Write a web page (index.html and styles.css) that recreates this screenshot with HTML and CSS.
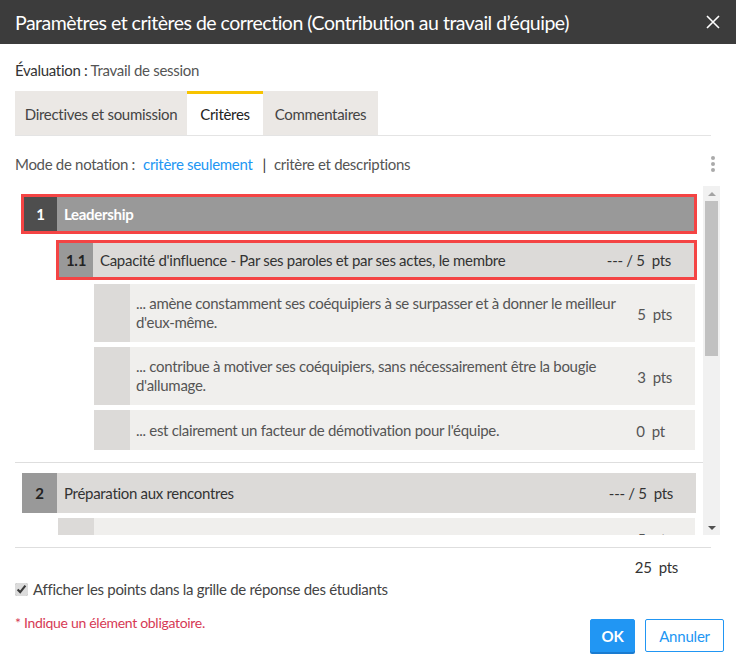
FILE: index.html
```html
<!DOCTYPE html>
<html lang="fr">
<head>
    <meta charset="UTF-8">
    <title>Paramètres et critères de correction</title>
    <link rel="stylesheet" href="styles.css">
</head>
<body>
    <div class="modal">
        <div class="modal-head">
            <h1>Paramètres et critères de correction (Contribution au travail d’équipe)</h1>
            <svg class="close" width="14" height="14" viewBox="0 0 14 14"><path d="M1 1 L13 13 M13 1 L1 13" stroke="#fff" stroke-width="1.6"/></svg>
        </div>
        <div class="modal-body">
            <p class="eval"><span class="eval-label">Évaluation :</span> Travail de session</p>
            <div class="tabs">
                <div class="tab t1">Directives et soumission</div>
                <div class="tab t2 active">Critères</div>
                <div class="tab t3">Commentaires</div>
            </div>
            <div class="mode">
                <span>Mode de notation :</span>
                <a href="#" class="mode-link">critère seulement</a>
                <span class="sep">|</span>
                <span>critère et descriptions</span>
                <span class="kebab"><i></i><i></i><i></i></span>
            </div>

            <div class="grid-wrap">
                <div class="grid">
                    <div class="crit main hl">
                        <div class="num">1</div>
                        <div class="label">Leadership</div>
                    </div>
                    <div class="crit sub hl">
                        <div class="num">1.1</div>
                        <div class="label">Capacité d'influence - Par ses paroles et par ses actes, le membre</div>
                        <div class="score">--- / 5&nbsp; pts</div>
                    </div>
                    <div class="level l2">
                        <div class="num"></div>
                        <div class="label">... amène constamment ses coéquipiers à se surpasser et à donner le meilleur d'eux-même.</div>
                        <div class="score">5&nbsp; pts</div>
                    </div>
                    <div class="level l2">
                        <div class="num"></div>
                        <div class="label">... contribue à motiver ses coéquipiers, sans nécessairement être la bougie d'allumage.</div>
                        <div class="score">3&nbsp; pts</div>
                    </div>
                    <div class="level l2">
                        <div class="num"></div>
                        <div class="label">... est clairement un facteur de démotivation pour l'équipe.</div>
                        <div class="score">0&nbsp; pt&nbsp;&nbsp;</div>
                    </div>
                    <div class="divider"></div>
                    <div class="crit main plain">
                        <div class="num">2</div>
                        <div class="label">Préparation aux rencontres</div>
                        <div class="score">--- / 5&nbsp; pts</div>
                    </div>
                    <div class="level l1">
                        <div class="num"></div>
                        <div class="label"></div>
                        <div class="score">5&nbsp; pts</div>
                    </div>
                </div>
                <div class="scrollbar">
                    <span class="arrow up"></span>
                    <span class="thumb"></span>
                    <span class="track"></span>
                    <span class="arrow down"></span>
                </div>
            </div>

            <div class="total">25&nbsp; pts</div>
            <label class="check"><input type="checkbox" checked> Afficher les points dans la grille de réponse des étudiants</label>
            <div class="foot">
                <span class="required">* Indique un élément obligatoire.</span>
                <div class="buttons">
                    <button class="btn btn-ok">OK</button>
                    <button class="btn btn-cancel">Annuler</button>
                </div>
            </div>
        </div>
    </div>
</body>
</html>
```

FILE: styles.css
```css
html, body { margin: 0; padding: 0; background: #fff; }
body { font-family: "Lato", "Liberation Sans", sans-serif; color: #333; font-size: 15px; letter-spacing: -0.3px; }
* { box-sizing: border-box; }

.modal { width: 736px; height: 669px; background: #fff; }
.modal-head { height: 44px; background: #3c3c3c; display: flex; align-items: center; justify-content: space-between; padding: 0 16px 0 15px; }
.modal-head h1 { margin: 0; font-size: 19.5px; font-weight: normal; color: #fff; letter-spacing: -0.5px; }

.modal-body { padding: 0 15px; }
.eval { margin: 0; padding-top: 17px; height: 47px; color: #555; }
.eval-label { color: #333; }

.tabs { display: flex; height: 45px; border-bottom: 1px solid #e4e4e4; width: 696px; }
.tab { background: #ebe8e5; color: #444; display: flex; align-items: center; justify-content: center; height: 44px; border-top: 3px solid transparent; padding-bottom: 2px; }
.tab.t1 { width: 172px; }
.tab.t2 { width: 76px; }
.tab.t3 { width: 115px; }
.tab.active { background: #fff; border-top-color: #f7c300; color: #222; }

.mode { display: flex; align-items: center; height: 50px; padding-top: 6px; color: #555; }
.mode-link { color: #2196f3; text-decoration: none; margin-left: 8px; }
.sep { margin: 0 8px 0 10px; color: #333; }
.kebab { margin-left: auto; margin-right: 6px; display: flex; flex-direction: column; gap: 2px; }
.kebab i { display: block; width: 4px; height: 4px; border-radius: 50%; background: #aaa; }

.grid-wrap { display: flex; height: 349px; width: 705px; }
.grid { flex: 1; overflow: hidden; padding-top: 11px; }
.scrollbar { width: 17px; flex: none; background: #f1f1f1; display: flex; flex-direction: column; align-items: center; }
.arrow { width: 0; height: 0; border-left: 4px solid transparent; border-right: 4px solid transparent; margin: 6px 0 5px; }
.arrow.up { border-bottom: 4px solid #a3a3a3; }
.arrow.down { border-top: 4px solid #505050; }
.thumb { width: 13px; height: 155px; background: #c1c1c1; }
.track { flex: 1; }

.crit, .level { display: flex; align-items: stretch; }
.num { flex: none; display: flex; align-items: center; justify-content: center; font-weight: bold; }
.label { flex: 1; display: flex; align-items: center; padding: 0 8px 0 7px; }
.score { flex: none; display: flex; align-items: center; padding-right: 23px; white-space: pre; }

.crit { height: 34px; }
.crit.hl { outline: 3px solid #f44444; }
.crit.main.hl { margin: 0 9px 12px 9px; background: #999; color: #fff; }
.crit.main.hl .num { background: #4e4e4e; width: 33px; }
.crit.main.hl .label { font-weight: bold; }
.crit.sub { margin: 0 9px 7px 44px; background: #dcdad8; color: #333; }
.crit.sub .num { background: #999; color: #222; width: 34px; }
.crit.main.plain { background: #dcdad8; margin: 0 7px 5px; height: 40px; }
.crit.main.plain .num { background: #999; width: 35px; color: #222; }

.level { background: #f0efed; margin-right: 8px; margin-bottom: 5px; color: #555; min-height: 40px; }
.level .num { background: #dcdad8; width: 36px; }
.level .label { padding: 10px 14px 10px 6px; line-height: 19px; }
.level.l2 { margin-left: 79px; }
.level.l1 { margin-left: 43px; }
.level .score { padding-top: 2px; }

.divider { height: 1px; background: #dedede; margin: 12px 0 10px 0; }

.total { border-top: 1px solid #dedede; margin-top: 12px; width: 696px; text-align: right; padding: 10px 33px 0 0; height: 31px; line-height: 18px; color: #333; }
.check { display: flex; align-items: center; gap: 5px; color: #444; height: 22px; }
.check input { margin: 0; width: 13px; height: 13px; accent-color: #dcdcdc; }

.foot { display: flex; justify-content: space-between; align-items: flex-start; padding-top: 13px; margin-right: -3px; }
.required { color: #d63a55; font-size: 14px; line-height: 20px; }
.buttons { display: flex; gap: 10px; margin-top: 6px; }
.btn { font-family: inherit; font-size: 15px; height: 33px; border-radius: 2px; padding: 0; letter-spacing: -0.2px; }
.btn-ok { width: 45px; background: #2196f3; color: #fff; border: 1px solid #2196f3; font-weight: bold; box-shadow: 0 2px 0 #1a7bd0; }
.btn-cancel { width: 79px; background: #fff; color: #2196f3; border: 1px solid #2196f3; }
```
